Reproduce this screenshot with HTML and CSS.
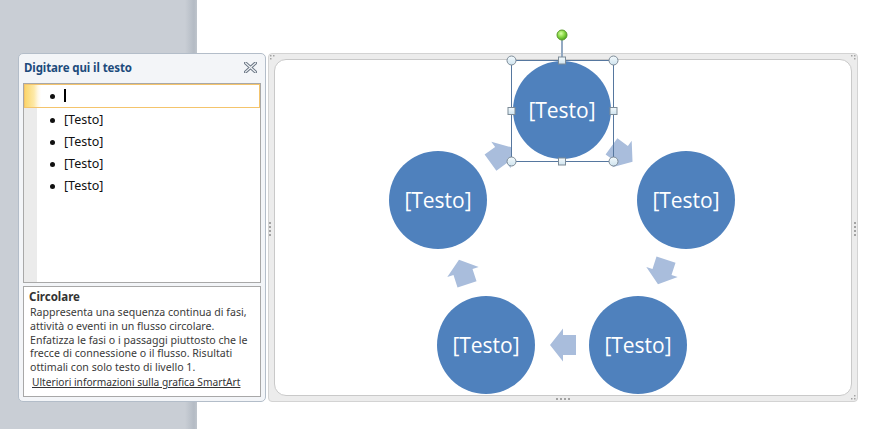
FILE: index.html
```html
<!DOCTYPE html>
<html lang="it">
<head>
<meta charset="utf-8">
<title>SmartArt - Circolare</title>
<link rel="stylesheet" href="styles.css">
</head>
<body>
<div class="stage">
  <section class="textpanel">
    <header class="tp-head">
      <span class="tp-title">Digitare qui il testo</span>
      <svg class="tp-close" width="13" height="11" viewBox="0 0 13 11">
        <path d="M1.5 1 L11.5 10 M11.5 1 L1.5 10" stroke="#6b7785" stroke-width="3.2" stroke-linecap="square"/>
        <path d="M1.5 1 L11.5 10 M11.5 1 L1.5 10" stroke="#f3f5f8" stroke-width="1.2" stroke-linecap="square"/>
      </svg>
    </header>
    <div class="tp-pane">
      <ul class="tp-list">
        <li class="tp-row active"><span class="cursor"></span></li>
        <li class="tp-row">[Testo]</li>
        <li class="tp-row">[Testo]</li>
        <li class="tp-row">[Testo]</li>
        <li class="tp-row">[Testo]</li>
      </ul>
    </div>
    <div class="tp-desc">
      <div class="d-title">Circolare</div>
      <p class="d-text">Rappresenta una sequenza continua di fasi,<br>attività o eventi in un flusso circolare.<br>Enfatizza le fasi o i passaggi piuttosto che le<br>frecce di connessione o il flusso. Risultati<br>ottimali con solo testo di livello 1.</p>
      <a class="d-link" href="#">Ulteriori informazioni sulla grafica SmartArt</a>
    </div>
  </section>

  <section class="frame">
    <div class="canvas">
      <svg class="diagram" width="576" height="335" viewBox="275 60 576 335">
        <defs>
          <radialGradient id="green" cx="40%" cy="35%" r="65%">
            <stop offset="0" stop-color="#d8ffa8"/>
            <stop offset="0.5" stop-color="#8fdc4a"/>
            <stop offset="1" stop-color="#4ea51f"/>
          </radialGradient>
          <linearGradient id="hnd" x1="0" y1="0" x2="0" y2="1">
            <stop offset="0" stop-color="#f4fafd"/>
            <stop offset="1" stop-color="#cfe3ee"/>
          </linearGradient>
          <polygon id="arw" points="-13,-10 0,-10 0,-16.5 13,0 0,16.5 0,10 -13,10"/>
        </defs>

        <!-- frame grips -->
        <g fill="#a3a3a3">
          <rect x="269" y="222" width="2" height="2"/><rect x="269" y="226" width="2" height="2"/><rect x="269" y="230" width="2" height="2"/><rect x="269" y="234" width="2" height="2"/>
          <rect x="854" y="222" width="2" height="2"/><rect x="854" y="226" width="2" height="2"/><rect x="854" y="230" width="2" height="2"/><rect x="854" y="234" width="2" height="2"/>
          <rect x="556" y="398" width="2" height="2"/><rect x="560" y="398" width="2" height="2"/><rect x="564" y="398" width="2" height="2"/><rect x="568" y="398" width="2" height="2"/>
          <rect x="270" y="55" width="1.5" height="1.5"/><rect x="273" y="55" width="1.5" height="1.5"/><rect x="270" y="58" width="1.5" height="1.5"/>
          <rect x="851" y="55" width="1.5" height="1.5"/><rect x="854" y="55" width="1.5" height="1.5"/><rect x="854" y="58" width="1.5" height="1.5"/>
          <rect x="851" y="398" width="1.5" height="1.5"/><rect x="854" y="398" width="1.5" height="1.5"/><rect x="854" y="395" width="1.5" height="1.5"/>
        </g>

        <!-- arrows -->
        <g fill="#a9bddc">
          <use href="#arw" transform="translate(622 154) rotate(36)"/>
          <use href="#arw" transform="translate(662 272) rotate(108)"/>
          <use href="#arw" transform="translate(563 345) rotate(180)"/>
          <use href="#arw" transform="translate(463 272) rotate(252)"/>
          <use href="#arw" transform="translate(501 155) rotate(324)"/>
        </g>

        <!-- nodes -->
        <g fill="#4f81bd">
          <circle cx="562" cy="110" r="49"/>
          <circle cx="686" cy="200" r="49"/>
          <circle cx="638" cy="345" r="49"/>
          <circle cx="486" cy="345" r="49"/>
          <circle cx="438" cy="200" r="49"/>
        </g>
        <g class="node-text" fill="#ffffff" text-anchor="middle">
          <text x="562" y="118">[Testo]</text>
          <text x="686" y="208">[Testo]</text>
          <text x="638" y="353">[Testo]</text>
          <text x="486" y="353">[Testo]</text>
          <text x="438" y="208">[Testo]</text>
        </g>

        <!-- selection -->
        <line x1="562" y1="40" x2="562" y2="57" stroke="#93a9c2" stroke-width="2"/>
        <rect x="511.5" y="60.5" width="102" height="101" fill="none" stroke="#56779f" stroke-width="1"/>
        <g fill="url(#hnd)" stroke="#7d8b97" stroke-width="1">
          <circle cx="511.5" cy="60.5" r="4.5"/>
          <circle cx="613.5" cy="60.5" r="4.5"/>
          <circle cx="511.5" cy="161.5" r="4.5"/>
          <circle cx="613.5" cy="161.5" r="4.5"/>
          <rect x="558.5" y="57" width="7" height="7"/>
          <rect x="558.5" y="158" width="7" height="7"/>
          <rect x="508" y="107.5" width="7" height="7"/>
          <rect x="610" y="107.5" width="7" height="7"/>
        </g>
        <circle cx="562" cy="35" r="5" fill="url(#green)" stroke="#5b9a2c" stroke-width="1"/>
      </svg>
    </div>
  </section>
</div>
</body>
</html>
```

FILE: styles.css
```css
html, body {
  margin: 0;
  padding: 0;
}

body {
  width: 874px;
  height: 429px;
  overflow: hidden;
  background: linear-gradient(to right, #c9ced5 0, #c9ced5 185px, #b4bbc4 194px, #bfc5cc 197px, #ffffff 197px);
  font-family: "Noto Sans", "Open Sans", sans-serif;
}

.stage {
  display: flex;
  align-items: flex-start;
  padding: 53px 0 0 18px;
  gap: 2px;
}

/* ---------- text panel ---------- */
.textpanel {
  box-sizing: border-box;
  width: 248px;
  height: 349px;
  border: 1px solid #b3bdc9;
  border-radius: 5px;
  background: #f3f5f8;
  padding: 0 4px 4px 4px;
  display: flex;
  flex-direction: column;
}

.tp-head {
  height: 29px;
  display: flex;
  align-items: center;
  justify-content: space-between;
  padding: 0 4px 0 1px;
}

.tp-title {
  font-weight: bold;
  font-size: 11.5px;
  color: #1d4b7c;
  letter-spacing: -0.1px;
  margin-top: -2px;
}

.tp-close {
  display: block;
  margin-top: -1px;
}

.tp-pane {
  box-sizing: border-box;
  height: 201px;
  border: 1px solid #a8a8a8;
  background: linear-gradient(to right, #ebebeb 0, #ebebeb 13px, #ffffff 13px);
  padding-top: 0;
}

.tp-list {
  list-style: none;
  margin: 0;
  padding: 0;
}

.tp-row {
  position: relative;
  box-sizing: border-box;
  height: 22px;
  padding-left: 40px;
  font-size: 12.5px;
  line-height: 24px;
  color: #111;
}

.tp-row::before {
  content: "";
  position: absolute;
  left: 26px;
  top: 10px;
  width: 5px;
  height: 5px;
  border-radius: 50%;
  background: #111;
}

.tp-row.active {
  height: 24px;
  line-height: 22px;
  border: 1px solid #f4c46c;
  background: linear-gradient(to right, #fbd66c 0, #fde9a8 9px, #fff8e6 13px, #ffffff 16px);
  padding-left: 39px;
}

.tp-row.active::before {
  left: 25px;
  top: 9px;
}

.cursor {
  display: inline-block;
  width: 1.5px;
  height: 13px;
  background: #000;
  vertical-align: middle;
  margin-top: -2px;
}

.tp-desc {
  box-sizing: border-box;
  margin-top: 3px;
  height: 111px;
  border: 1px solid #a8a8a8;
  background: #ffffff;
  padding: 3px 6px 0 5px;
  color: #333333;
  font-size: 11px;
}

.d-title {
  font-weight: bold;
  font-size: 11.5px;
  line-height: 14px;
  color: #333;
}

.d-text {
  margin: 2px 0 0 1px;
  line-height: 13.6px;
  font-size: 10.6px;
  color: #3a3a3a;
}

.d-link {
  display: inline-block;
  margin: 1px 0 0 3px;
  font-size: 10.2px;
  line-height: 14px;
  color: #333;
  text-decoration: underline;
}

/* ---------- SmartArt frame ---------- */
.frame {
  box-sizing: border-box;
  width: 590px;
  height: 349px;
  border: 1px solid #d3d3d3;
  border-radius: 4px;
  background: #ececec;
  padding: 5px;
}

.canvas {
  box-sizing: border-box;
  width: 100%;
  height: 100%;
  border: 1px solid #c9c9c9;
  border-radius: 12px;
  background: #ffffff;
}

.diagram {
  display: block;
  overflow: visible;
}

.node-text {
  font-family: "Open Sans", "Noto Sans", sans-serif;
  font-size: 21px;
}
```
